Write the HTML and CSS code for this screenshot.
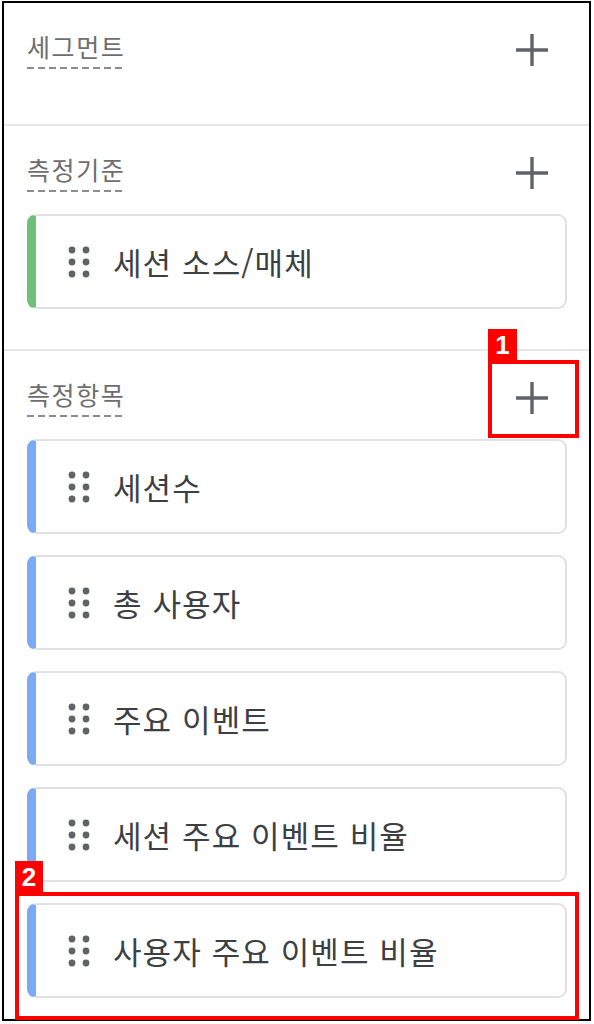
FILE: index.html
```html
<!DOCTYPE html>
<html lang="ko">
<head>
<meta charset="utf-8">
<title>탐색 설정</title>
<link rel="stylesheet" href="styles.css">
</head>
<body>
<div class="panel">
  <section class="section section-empty">
    <div class="section-head">
      <span class="label">세그먼트</span>
      <button class="add-btn" aria-label="추가">
        <svg width="34" height="34" viewBox="0 0 34 34"><path d="M17 1V33M1 17H33" stroke="#5f6368" stroke-width="3.4" fill="none"/></svg>
      </button>
    </div>
  </section>
  <section class="section">
    <div class="section-head">
      <span class="label">측정기준</span>
      <button class="add-btn" aria-label="추가">
        <svg width="34" height="34" viewBox="0 0 34 34"><path d="M17 1V33M1 17H33" stroke="#5f6368" stroke-width="3.4" fill="none"/></svg>
      </button>
    </div>
    <div class="chips">
      <div class="chip chip-dim">
        <svg class="grip" width="22" height="32" viewBox="0 0 22 32"><g fill="#5f6368"><circle cx="4" cy="4" r="3.4"/><circle cx="18" cy="4" r="3.4"/><circle cx="4" cy="16" r="3.4"/><circle cx="18" cy="16" r="3.4"/><circle cx="4" cy="28" r="3.4"/><circle cx="18" cy="28" r="3.4"/></g></svg>
        <span class="chip-text">세션 소스/매체</span>
      </div>
    </div>
  </section>
  <section class="section">
    <div class="section-head">
      <span class="label">측정항목</span>
      <button class="add-btn" aria-label="추가">
        <svg width="34" height="34" viewBox="0 0 34 34"><path d="M17 1V33M1 17H33" stroke="#5f6368" stroke-width="3.4" fill="none"/></svg>
      </button>
    </div>
    <div class="chips">
      <div class="chip chip-metric">
        <svg class="grip" width="22" height="32" viewBox="0 0 22 32"><g fill="#5f6368"><circle cx="4" cy="4" r="3.4"/><circle cx="18" cy="4" r="3.4"/><circle cx="4" cy="16" r="3.4"/><circle cx="18" cy="16" r="3.4"/><circle cx="4" cy="28" r="3.4"/><circle cx="18" cy="28" r="3.4"/></g></svg>
        <span class="chip-text">세션수</span>
      </div>
      <div class="chip chip-metric">
        <svg class="grip" width="22" height="32" viewBox="0 0 22 32"><g fill="#5f6368"><circle cx="4" cy="4" r="3.4"/><circle cx="18" cy="4" r="3.4"/><circle cx="4" cy="16" r="3.4"/><circle cx="18" cy="16" r="3.4"/><circle cx="4" cy="28" r="3.4"/><circle cx="18" cy="28" r="3.4"/></g></svg>
        <span class="chip-text">총 사용자</span>
      </div>
      <div class="chip chip-metric">
        <svg class="grip" width="22" height="32" viewBox="0 0 22 32"><g fill="#5f6368"><circle cx="4" cy="4" r="3.4"/><circle cx="18" cy="4" r="3.4"/><circle cx="4" cy="16" r="3.4"/><circle cx="18" cy="16" r="3.4"/><circle cx="4" cy="28" r="3.4"/><circle cx="18" cy="28" r="3.4"/></g></svg>
        <span class="chip-text">주요 이벤트</span>
      </div>
      <div class="chip chip-metric">
        <svg class="grip" width="22" height="32" viewBox="0 0 22 32"><g fill="#5f6368"><circle cx="4" cy="4" r="3.4"/><circle cx="18" cy="4" r="3.4"/><circle cx="4" cy="16" r="3.4"/><circle cx="18" cy="16" r="3.4"/><circle cx="4" cy="28" r="3.4"/><circle cx="18" cy="28" r="3.4"/></g></svg>
        <span class="chip-text">세션 주요 이벤트 비율</span>
      </div>
      <div class="chip chip-metric">
        <svg class="grip" width="22" height="32" viewBox="0 0 22 32"><g fill="#5f6368"><circle cx="4" cy="4" r="3.4"/><circle cx="18" cy="4" r="3.4"/><circle cx="4" cy="16" r="3.4"/><circle cx="18" cy="16" r="3.4"/><circle cx="4" cy="28" r="3.4"/><circle cx="18" cy="28" r="3.4"/></g></svg>
        <span class="chip-text">사용자 주요 이벤트 비율</span>
      </div>
    </div>
  </section>
</div>

<div class="mark mark-1"></div>
<div class="mark-tag mark-tag-1">1</div>
<div class="mark mark-2"></div>
<div class="mark-tag mark-tag-2">2</div>
</body>
</html>
```

FILE: styles.css
```css
* {
  box-sizing: border-box;
}

html, body {
  margin: 0;
  padding: 0;
  background: #ffffff;
}

body {
  position: relative;
  width: 594px;
  height: 1024px;
  overflow: hidden;
  font-family: "Noto Sans CJK KR", "Noto Sans", sans-serif;
}

.panel {
  margin: 1px 0 0 2px;
  width: 589px;
  height: 1020px;
  border: 2px solid #000000;
  background: #ffffff;
  overflow: hidden;
}

.section {
  padding: 28px 22px 40px 23px;
  border-bottom: 2px solid #e6e6e6;
}

.section:last-child {
  border-bottom: none;
}

.section-empty {
  padding-bottom: 55px;
}

.section-head {
  display: flex;
  justify-content: space-between;
  align-items: flex-start;
}

.label {
  font-size: 25px;
  line-height: 30px;
  letter-spacing: 1.6px;
  color: #6e6e6e;
  padding-bottom: 6px;
  background-image: repeating-linear-gradient(to right, #8c8c8c 0 7px, transparent 7px 11px);
  background-size: 100% 2px;
  background-repeat: no-repeat;
  background-position: left bottom;
  height: 38px;
}

.add-btn {
  margin: 2px 18px 0 0;
  padding: 0;
  width: 34px;
  height: 34px;
  border: none;
  background: none;
  display: flex;
}

.chips {
  display: flex;
  flex-direction: column;
  gap: 21px;
  margin-top: 22px;
}

.chip {
  height: 95px;
  display: flex;
  align-items: center;
  border: 2px solid #e0e1e4;
  border-radius: 9px;
  padding-left: 32px;
  background: #ffffff;
}

.chip-dim {
  border-left: 9px solid #70c07a;
}

.chip-metric {
  border-left: 9px solid #7aa9f6;
}

.grip {
  flex: none;
  margin-right: 23px;
}

.chip-text {
  font-size: 31px;
  line-height: 40px;
  letter-spacing: 1.1px;
  color: #3c4043;
  white-space: nowrap;
}

.mark {
  position: absolute;
  border: 4px solid #ff0000;
}

.mark-1 {
  left: 488px;
  top: 360px;
  width: 91px;
  height: 78px;
}

.mark-2 {
  left: 15px;
  top: 892px;
  width: 564px;
  height: 128px;
}

.mark-tag {
  position: absolute;
  background: #ff0000;
  color: #ffffff;
  font-family: "Liberation Sans", Arial, sans-serif;
  font-weight: bold;
  font-size: 26px;
  line-height: 32px;
  text-align: center;
}

.mark-tag-1 {
  left: 488px;
  top: 329px;
  width: 29px;
  height: 32px;
}

.mark-tag-2 {
  left: 15px;
  top: 861px;
  width: 28px;
  height: 32px;
}
```
